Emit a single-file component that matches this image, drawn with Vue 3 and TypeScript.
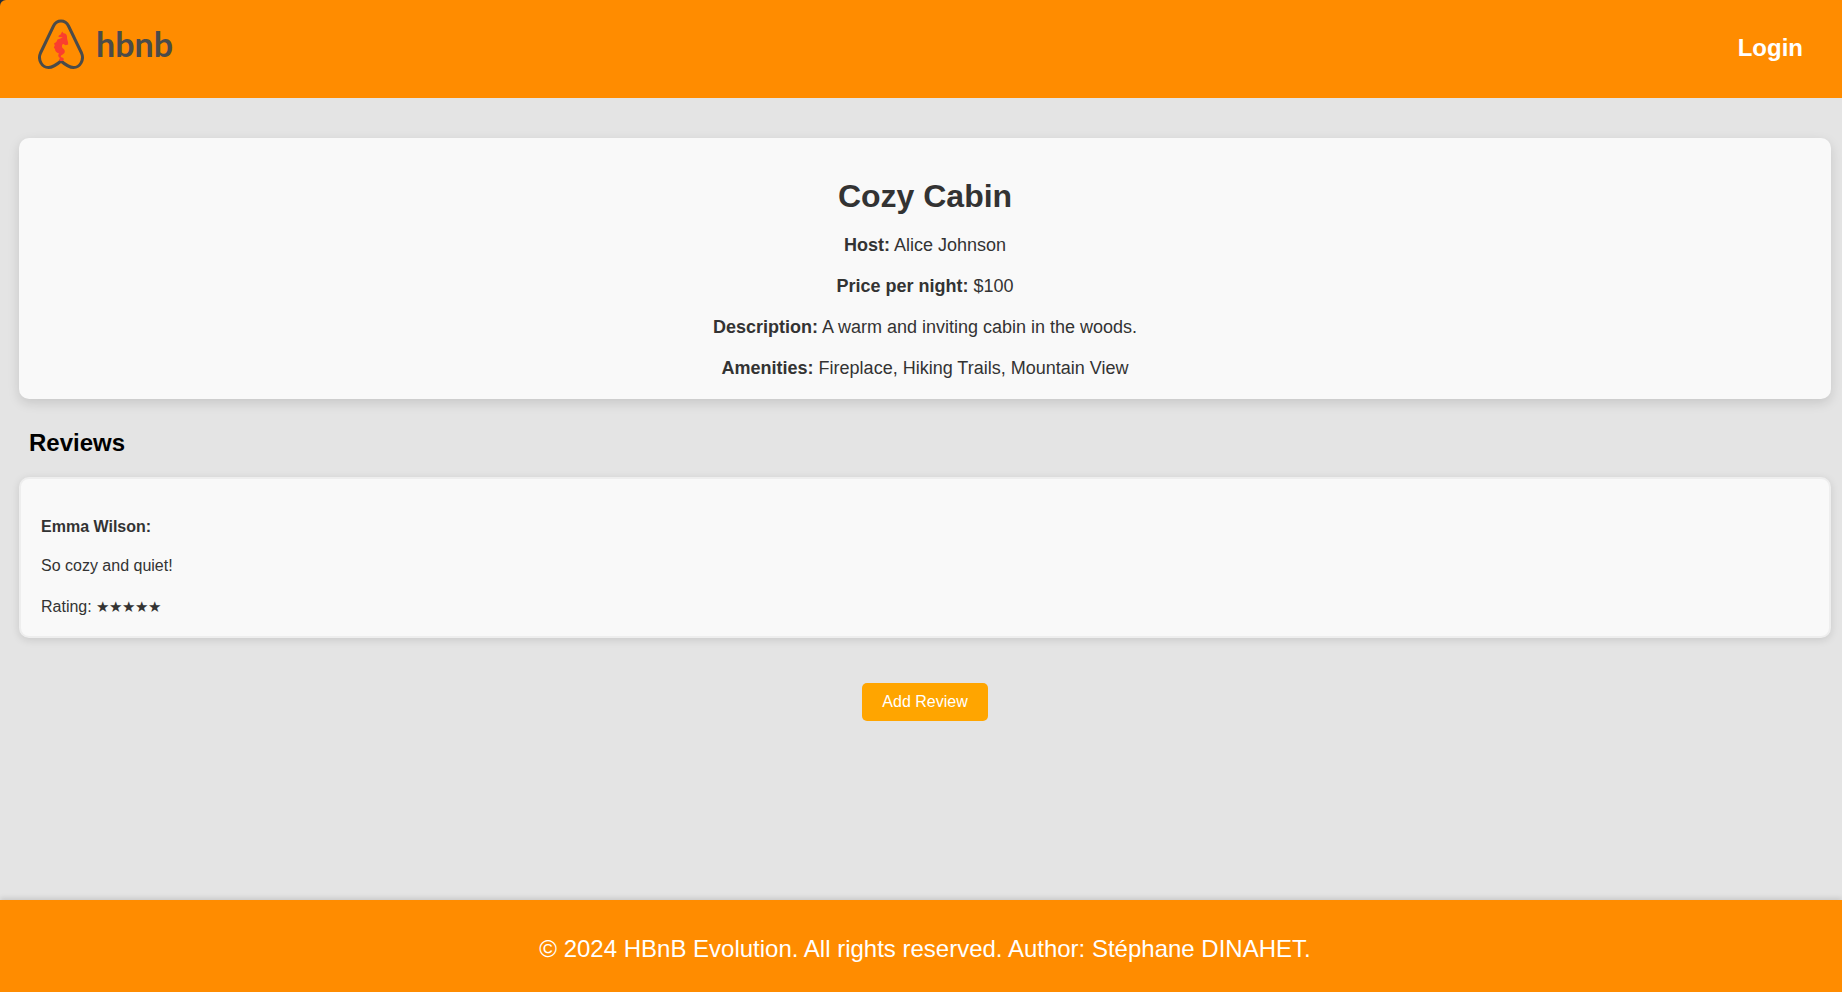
<script setup lang="ts">
interface Review {
  author: string
  text: string
  rating: number
}

const place = {
  name: 'Cozy Cabin',
  details: [
    { label: 'Host', value: 'Alice Johnson' },
    { label: 'Price per night', value: '$100' },
    { label: 'Description', value: 'A warm and inviting cabin in the woods.' },
    { label: 'Amenities', value: 'Fireplace, Hiking Trails, Mountain View' },
  ],
}

const reviews: Review[] = [
  { author: 'Emma Wilson', text: 'So cozy and quiet!', rating: 5 },
]
</script>

<template>
  <div class="page">
    <div class="top">
      <header class="header">
        <a class="logo" href="#" aria-label="hbnb home">
          <svg class="mark" viewBox="0 0 46 51" aria-hidden="true">
            <path
              d="M23 2C19.500 2 17 4 15.500 7L2.500 34C-.5 41 4 48.500 10.500 48.500C15.500 48.500 19 45.500 23 42C27 45.500 30.500 48.500 35.500 48.500C42 48.500 46.500 41 43.500 34L30.500 7C29 4 26.500 2 23 2Z"
              fill="none"
              stroke="#4b4b49"
              stroke-width="3"
              stroke-linejoin="round"
            />
            <path
              d="M24.200 12.500L25.500 14.200C28 14.200 29.200 16 29 18.500C28.900 20.500 30.400 22.500 30.200 25.500L27.500 26.200L25.500 25C24.500 24.800 24 25.800 24 27.500C24 29.500 26.800 29.800 26.800 32.500C26.800 35.500 23 35.500 22.800 37.500C22.700 38.800 25.800 37.800 25.800 40.200C25.600 42.500 21.500 42.800 21 40.500L22 39C19.500 37.500 20.200 35.500 21 34.500C18.500 34 17 32 17 30L15.800 28.500L16.800 26.500L16 24.500L18.300 23L19.500 20.500L22.500 19.500L24.800 18.300L20.500 18L20.800 16.500L22.600 15.500Z"
              fill="#fa3e2e"
            />
          </svg>
          <span class="wordmark">hbnb</span>
        </a>
        <a class="login" href="#">Login</a>
      </header>
    </div>

    <main class="main">
      <section class="card place">
        <h1>{{ place.name }}</h1>
        <p v-for="d in place.details" :key="d.label">
          <strong>{{ d.label }}:</strong> {{ d.value }}
        </p>
      </section>

      <section class="reviews">
        <h2>Reviews</h2>
        <article v-for="r in reviews" :key="r.author" class="card review">
          <h3>{{ r.author }}:</h3>
          <p>{{ r.text }}</p>
          <p>Rating: <span class="stars">{{ '★'.repeat(r.rating) }}</span></p>
        </article>
      </section>

      <button class="add" type="button">Add Review</button>
    </main>

    <footer class="footer">
      <p>© 2024 HBnB Evolution. All rights reserved. Author: Stéphane DINAHET.</p>
    </footer>
  </div>
</template>

<style>
body {
  background: #e4e4e4;
}
</style>

<style scoped>
.page {
  display: flex;
  flex-direction: column;
  min-height: 100vh;
  font-family: "Liberation Sans", Arial, sans-serif;
  font-size: 16px;
  line-height: 24px;
  color: #333;
  background: #e4e4e4;
}
h1,
h2,
h3,
p {
  margin: 0;
}
.top {
  background: #26303c;
}
.header {
  display: flex;
  align-items: center;
  justify-content: space-between;
  box-sizing: border-box;
  height: 98px;
  padding: 0 39px 2px 38px;
  background: #ff8c00;
  border-top-left-radius: 6px;
}
.logo {
  display: flex;
  align-items: center;
  gap: 12px;
  padding-bottom: 8px;
  text-decoration: none;
}
.mark {
  display: block;
  width: 46px;
  height: 51px;
}
.wordmark {
  font-family: Lato, sans-serif;
  font-size: 34px;
  font-weight: 700;
  line-height: 48px;
  color: #4b4b49;
}
.login {
  font-size: 24px;
  font-weight: 700;
  line-height: 28px;
  color: #fff;
  text-decoration: none;
}
.main {
  display: flex;
  flex: 1;
  flex-direction: column;
  padding: 40px 11px 40px 19px;
}
.card {
  background: #f9f9f9;
  border-radius: 10px;
}
.place {
  padding: 38px 20px 19px;
  font-size: 18px;
  text-align: center;
  box-shadow: 0 4px 12px rgba(0, 0, 0, 0.13);
}
.place h1 {
  margin-bottom: 17px;
  font-size: 32px;
  line-height: 40px;
}
.place p + p {
  margin-top: 17px;
}
.reviews h2 {
  padding: 28px 10px 18px;
  font-size: 24px;
  line-height: 32px;
  color: #000;
}
.review {
  padding: 36px 20px 17px;
  border: 2px solid #eee;
  box-shadow: 0 2px 8px rgba(0, 0, 0, 0.12);
}
.review h3 {
  margin-bottom: 15px;
  font-size: 16px;
}
.review p + p {
  margin-top: 17px;
}
.stars {
  font-size: 15px;
}
.add {
  align-self: center;
  margin-top: 45px;
  padding: 10px 20px;
  font-family: inherit;
  font-size: 16px;
  line-height: 18px;
  color: #fff;
  background: #ffa500;
  border: 0;
  border-radius: 5px;
  cursor: pointer;
}
.footer {
  padding: 35px 0 29px 8px;
  font-size: 24px;
  line-height: 28px;
  text-align: center;
  color: #fff;
  background: #ff8c00;
  box-shadow: 0 -2px 5px rgba(0, 0, 0, 0.12);
}
</style>
